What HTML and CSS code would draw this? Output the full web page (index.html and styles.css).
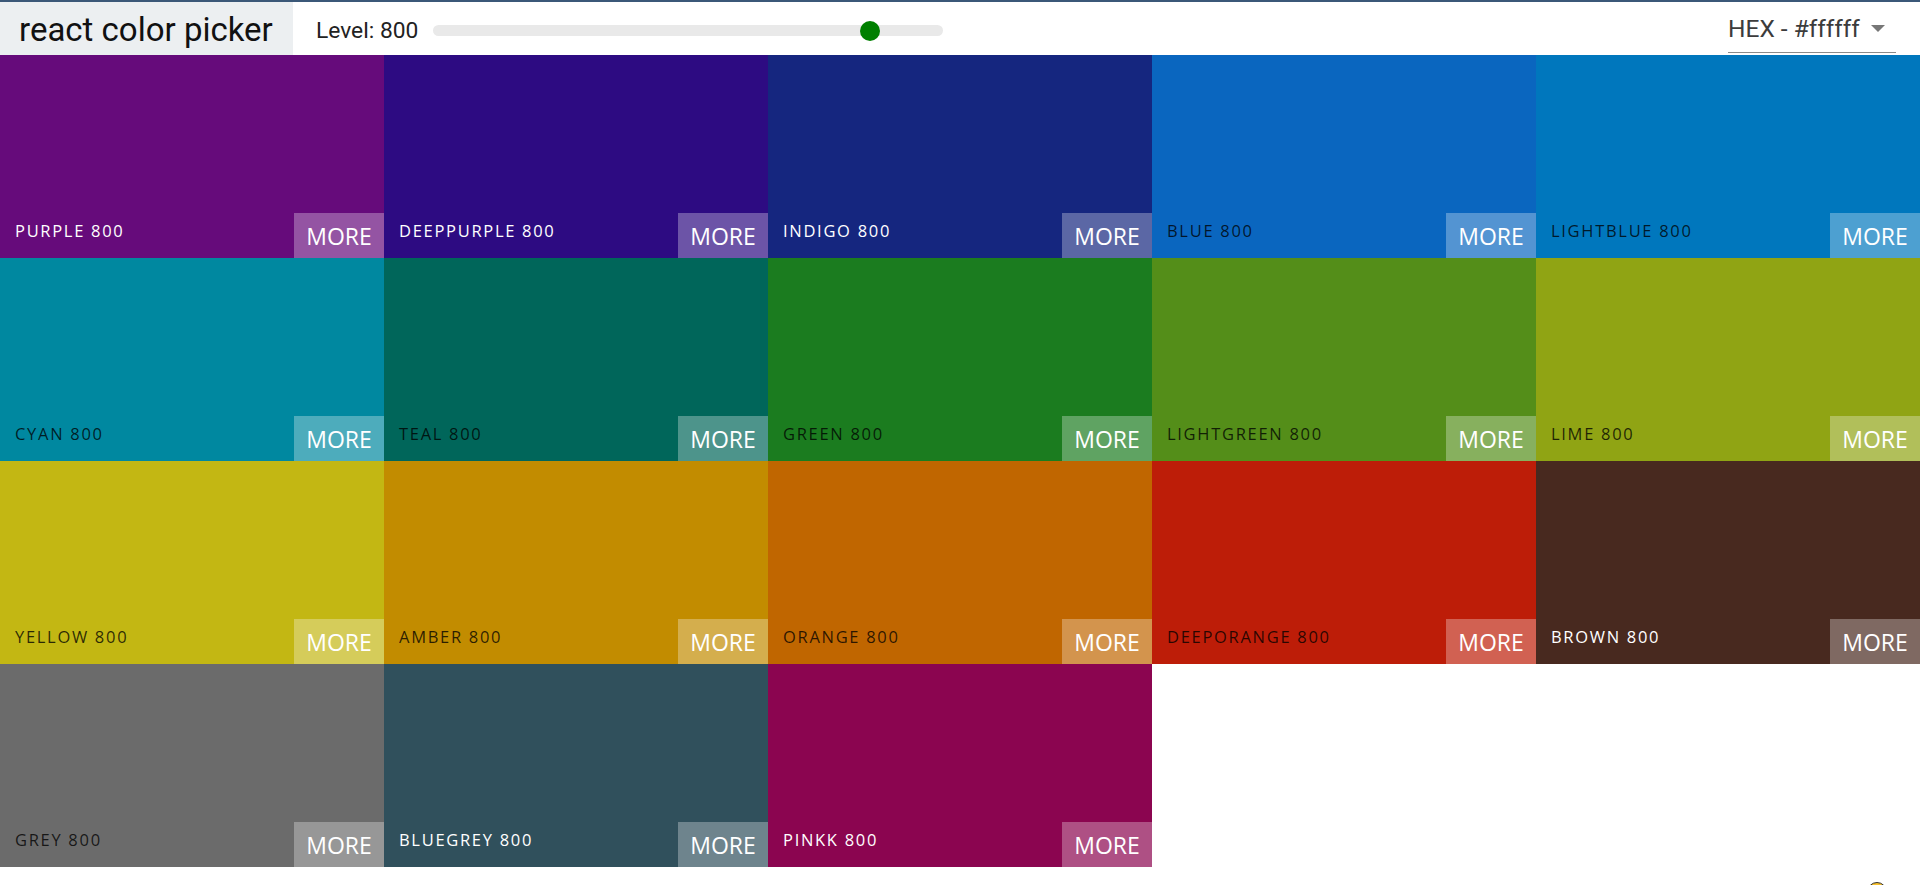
FILE: index.html
```html
<!DOCTYPE html>
<html lang="en">
<head>
<meta charset="utf-8">
<title>react color picker</title>
<link rel="stylesheet" href="styles.css">
</head>
<body>
<div class="palette">
  <header class="navbar">
    <div class="logo">react color picker</div>
    <div class="slider-wrap">
      <span class="level">Level: 800</span>
      <div class="slider">
        <div class="track"></div>
        <div class="handle"></div>
      </div>
    </div>
    <div class="select">
      <span class="select-text">HEX - #ffffff</span>
      <span class="caret"></span>
    </div>
  </header>
  <main class="colors">
    <div class="box" style="background:#660b7b"><span class="name light">purple 800</span><span class="more">MORE</span></div>
    <div class="box" style="background:#2d0b82"><span class="name light">deeppurple 800</span><span class="more">MORE</span></div>
    <div class="box" style="background:#15267f"><span class="name light">indigo 800</span><span class="more">MORE</span></div>
    <div class="box" style="background:#0a66bf"><span class="name">blue 800</span><span class="more">MORE</span></div>
    <div class="box" style="background:#0077bd"><span class="name">lightblue 800</span><span class="more">MORE</span></div>
    <div class="box" style="background:#0088a0"><span class="name">cyan 800</span><span class="more">MORE</span></div>
    <div class="box" style="background:#00665a"><span class="name">teal 800</span><span class="more">MORE</span></div>
    <div class="box" style="background:#1b7c1f"><span class="name">green 800</span><span class="more">MORE</span></div>
    <div class="box" style="background:#548e19"><span class="name">lightgreen 800</span><span class="more">MORE</span></div>
    <div class="box" style="background:#90a414"><span class="name">lime 800</span><span class="more">MORE</span></div>
    <div class="box" style="background:#c3b713"><span class="name">yellow 800</span><span class="more">MORE</span></div>
    <div class="box" style="background:#c28c00"><span class="name">amber 800</span><span class="more">MORE</span></div>
    <div class="box" style="background:#c06600"><span class="name">orange 800</span><span class="more">MORE</span></div>
    <div class="box" style="background:#bd1d08"><span class="name">deeporange 800</span><span class="more">MORE</span></div>
    <div class="box" style="background:#48291f"><span class="name light">brown 800</span><span class="more">MORE</span></div>
    <div class="box" style="background:#6b6b6b"><span class="name">grey 800</span><span class="more">MORE</span></div>
    <div class="box" style="background:#30505c"><span class="name light">bluegrey 800</span><span class="more">MORE</span></div>
    <div class="box" style="background:#8b0550"><span class="name light">pinkk 800</span><span class="more">MORE</span></div>
  </main>
  <footer class="footer">
    <span class="emoji"></span>
  </footer>
</div>
</body>
</html>
```
FILE: styles.css
```css
* { box-sizing: border-box; }
html, body { margin: 0; padding: 0; }
body {
  font-family: Roboto, "Liberation Sans", sans-serif;
  background: #fff;
  overflow: hidden;
}
.palette {
  border-top: 2px solid #3b5878;
}
.navbar {
  display: flex;
  align-items: center;
  height: 53px;
}
.logo {
  width: 293px;
  height: 100%;
  background: #eceff1;
  display: flex;
  align-items: center;
  padding-left: 19px;
  padding-top: 2px;
  font-size: 33px;
  color: #111;
}
.slider-wrap {
  display: flex;
  align-items: center;
  margin-left: 23px;
  padding-top: 4px;
}
.level {
  font-size: 22.8px;
  color: #222;
}
.slider {
  position: relative;
  width: 510px;
  height: 20px;
  margin-left: 15px;
  display: flex;
  align-items: center;
}
.track {
  width: 100%;
  height: 11px;
  border-radius: 6px;
  background: #e9e9e9;
}
.handle {
  position: absolute;
  left: 427px;
  top: 0;
  width: 20px;
  height: 20px;
  border-radius: 50%;
  background: #008000;
}
.select {
  align-self: flex-start;
  margin-left: auto;
  margin-right: 24px;
  width: 168px;
  height: 51px;
  display: flex;
  align-items: center;
  border-bottom: 1px solid #8a8a8a;
  padding-top: 2px;
}
.select-text {
  font-size: 24.5px;
  color: #3c3c3c;
}
.caret {
  margin-left: 11px;
  width: 0;
  height: 0;
  border-left: 7px solid transparent;
  border-right: 7px solid transparent;
  border-top: 7px solid #777;
}
.colors {
  display: grid;
  grid-template-columns: repeat(5, 1fr);
  grid-auto-rows: 203px;
}
.box {
  position: relative;
  display: flex;
  align-items: flex-end;
  justify-content: space-between;
}
.name {
  font-family: "Open Sans", "Noto Sans", sans-serif;
  text-transform: uppercase;
  font-size: 16.5px;
  letter-spacing: 1.7px;
  color: rgba(0, 0, 0, 0.78);
  padding: 0 0 16px 15px;
}
.name.light { color: #fff; }
.more {
  width: 90px;
  height: 45px;
  background: rgba(255, 255, 255, 0.3);
  color: #fff;
  font-family: "Open Sans", "Noto Sans", sans-serif;
  font-size: 23px;
  display: flex;
  align-items: center;
  justify-content: center;
  padding-top: 1px;
}
.footer {
  height: 40px;
  display: flex;
  justify-content: flex-end;
  padding: 15px 33px 0 0;
}
.emoji {
  width: 20px;
  height: 20px;
  border-radius: 50%;
  background: #f8c12c;
  border: 1.5px solid #333;
}
```
